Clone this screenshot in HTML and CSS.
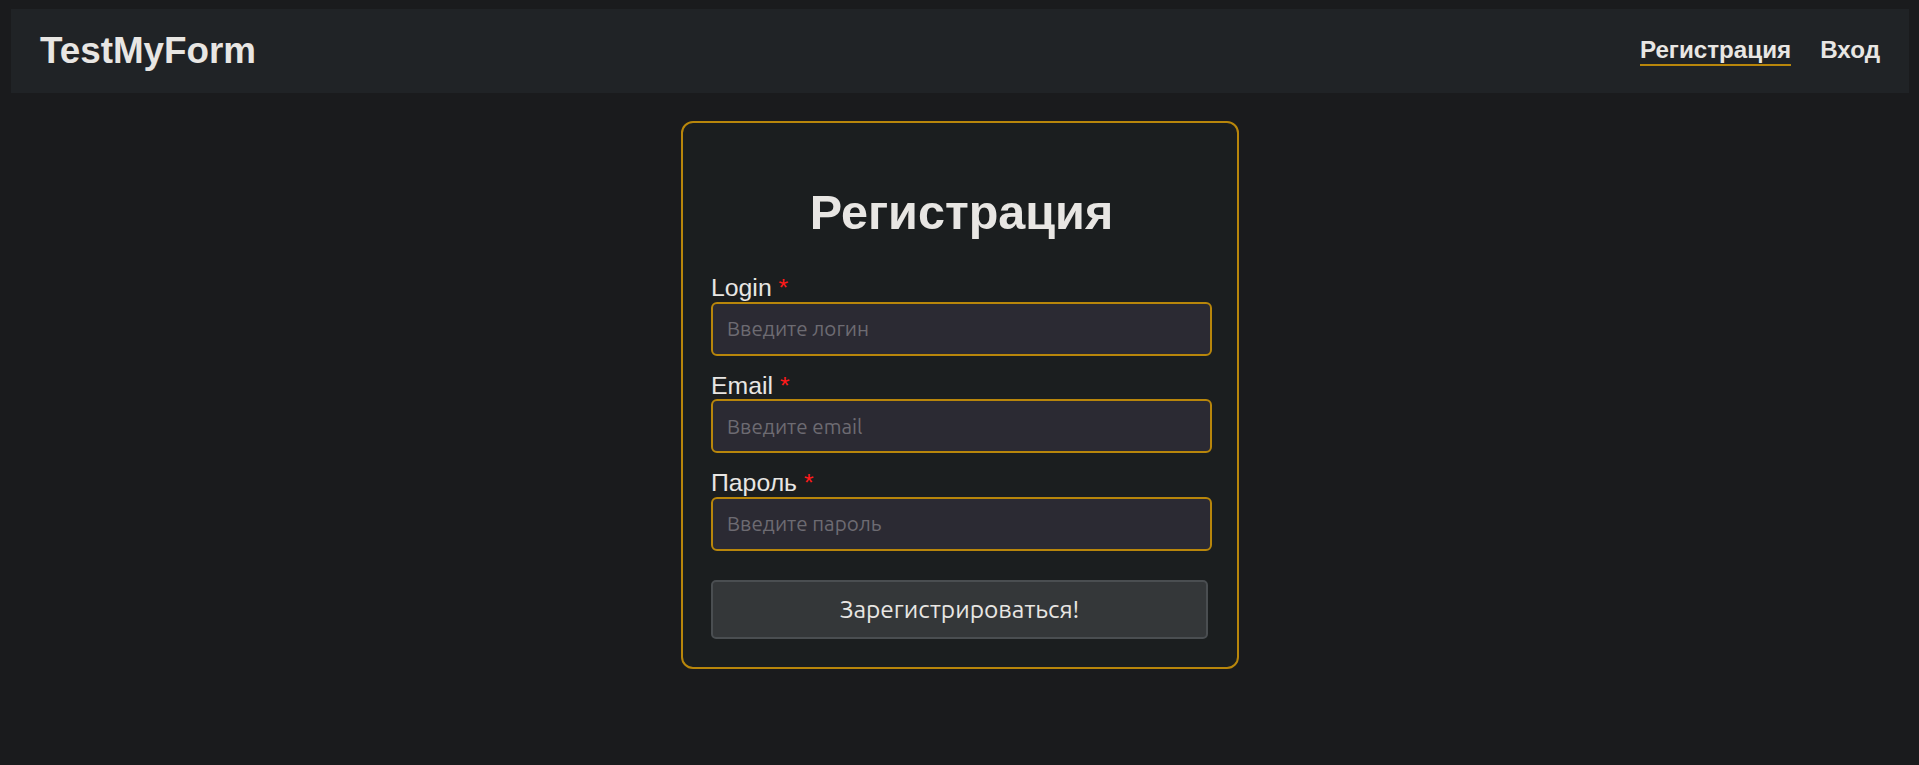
FILE: index.html
```html
<!DOCTYPE html>
<html lang="ru">
<head>
<meta charset="utf-8">
<title>TestMyForm</title>
<link rel="stylesheet" href="styles.css">
</head>
<body>
<header class="topbar">
  <a class="logo" href="#">TestMyForm</a>
  <nav class="nav">
    <a class="nav-link active" href="#">Регистрация</a>
    <a class="nav-link" href="#">Вход</a>
  </nav>
</header>
<main class="main">
  <form class="card">
    <h1 class="title">Регистрация</h1>
    <div class="field">
      <label class="label" for="login">Login <span class="req">*</span></label>
      <input class="input" id="login" type="text" placeholder="Введите логин">
    </div>
    <div class="field">
      <label class="label" for="email">Email <span class="req">*</span></label>
      <input class="input" id="email" type="email" placeholder="Введите email">
    </div>
    <div class="field">
      <label class="label" for="pass">Пароль <span class="req">*</span></label>
      <input class="input" id="pass" type="password" placeholder="Введите пароль">
    </div>
    <button class="btn" type="button">Зарегистрироваться!</button>
  </form>
</main>
</body>
</html>
```

FILE: styles.css
```css
* { box-sizing: border-box; }

html, body {
  background: #1a1b1d;
}

body {
  margin: 9px 10px 0 11px;
  font-family: "Liberation Sans", Arial, sans-serif;
  color: #e8e6e3;
}

.topbar {
  height: 84px;
  background: #202326;
  display: flex;
  align-items: center;
  justify-content: space-between;
  padding: 0 29px 0 29px;
}

.logo {
  font-size: 36.8px;
  font-weight: bold;
  color: #e8e6e3;
  text-decoration: none;
}

.nav {
  display: flex;
  gap: 29px;
  align-items: center;
}

.nav-link {
  font-size: 24.2px;
  font-weight: bold;
  color: #e8e6e3;
  text-decoration: none;
  border-bottom: 2px solid transparent;
}

.nav-link.active {
  border-bottom-color: #b8860b;
}

.main {
  display: flex;
  justify-content: center;
  padding-top: 28px;
}

.card {
  width: 558px;
  border: 2px solid #b8860b;
  border-radius: 12px;
  background: #1b1e1f;
  padding: 61px 25px 28px 28px;
  display: flex;
  flex-direction: column;
}

.title {
  font-size: 48.5px;
  font-weight: bold;
  text-align: center;
  margin: 0 0 34px;
  line-height: normal;
}

.field {
  display: flex;
  flex-direction: column;
  margin-bottom: 16px;
}

.label {
  font-size: 24.8px;
  line-height: 27.6px;
  color: #e8e6e3;
}

.req {
  color: #ff1a1a;
}

.input {
  height: 54px;
  width: 100%;
  border: 2px solid #b8860b;
  border-radius: 6px;
  background: #2b2a33;
  padding: 0 14px;
  font-family: "Ubuntu", "Noto Sans", sans-serif;
  font-size: 20.6px;
  color: #e8e6e3;
  outline: none;
}

.input::placeholder {
  color: #6d6b72;
  opacity: 1;
}

.btn {
  margin-top: 13px;
  width: calc(100% - 4px);
  height: 59px;
  background: #343739;
  border: 2px solid #4a4e51;
  border-radius: 5px;
  font-family: "Ubuntu", "Noto Sans", sans-serif;
  font-size: 24.5px;
  color: #e8e6e3;
}
```
